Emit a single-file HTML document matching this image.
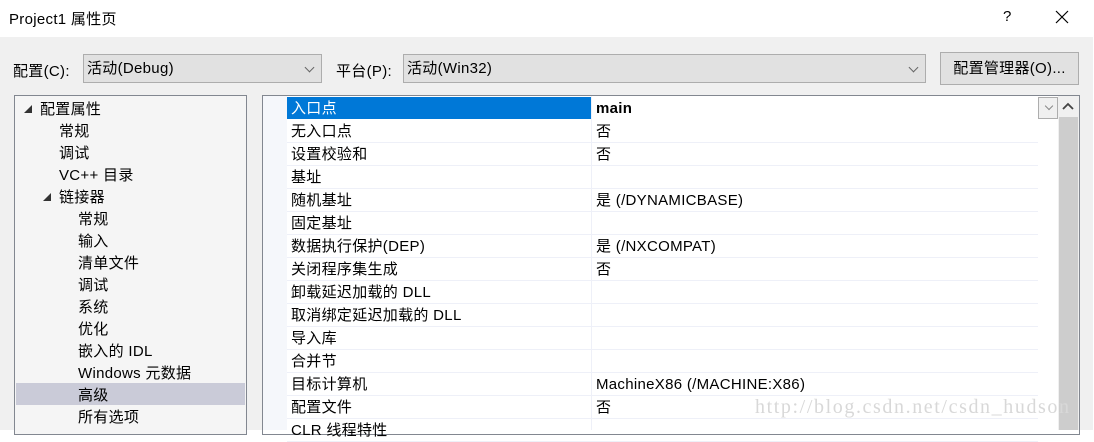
<!DOCTYPE html>
<html><head><meta charset="utf-8"><style>
*{margin:0;padding:0;box-sizing:border-box}
body{width:1094px;height:430px;overflow:hidden;background:#fff;font-family:"Liberation Sans","Noto Sans CJK SC",sans-serif;font-size:15px;letter-spacing:0.3px;color:#000;position:relative}
.a{position:absolute;white-space:nowrap}
.combo{position:absolute;background:#e1e1e1;border:1px solid #adadad;height:29px;line-height:28px;padding-left:3px}
.chev{position:absolute;right:8px;top:9px;width:7px;height:7px;border-right:1px solid #666;border-bottom:1px solid #666;transform:rotate(45deg)}
.tr{position:absolute;height:22px;line-height:23px}
.row{position:absolute;left:287px;width:751px;height:23px;border-bottom:1px solid #eef0f8;line-height:23px}
.row .n{position:absolute;left:4px}
.row .v{position:absolute;left:309px}
.tri{position:absolute;width:0;height:0;border-left:8px solid transparent;border-bottom:8px solid #333}
</style></head><body>
<div class="a" style="left:9px;top:8px;font-size:15px">Project1 属性页</div>
<div class="a" style="left:1003px;top:8px;font-size:15px">?</div>
<svg class="a" style="left:1055px;top:10px" width="14" height="14"><path d="M1 1L13 13M13 1L1 13" stroke="#000" stroke-width="1.2"/></svg>
<div class="a" style="left:0;top:37px;width:1093px;height:393px;background:#f0f0f0"></div>
<div class="a" style="left:13px;top:60px">配置(C):</div>
<div class="combo" style="left:83px;top:54px;width:239px">活动(Debug)<div class="chev"></div></div>
<div class="a" style="left:336px;top:60px">平台(P):</div>
<div class="combo" style="left:403px;top:54px;width:523px">活动(Win32)<div class="chev"></div></div>
<div class="a" style="left:940px;top:52px;width:139px;height:33px;border:1px solid #adadad;background:#e1e1e1;text-align:center;line-height:32px">配置管理器(O)...</div>
<div class="a" style="left:14px;top:95px;width:233px;height:340px;border:1px solid #828790;background:#f5f5f5"></div>
<div class="a" style="left:16px;top:383px;width:229px;height:22px;background:#cacbd8"></div>
<div class="tri" style="left:24px;top:105px"></div>
<div class="tr" style="left:40px;top:98px">配置属性</div>
<div class="tr" style="left:59px;top:120px">常规</div>
<div class="tr" style="left:59px;top:142px">调试</div>
<div class="tr" style="left:59px;top:164px">VC++ 目录</div>
<div class="tri" style="left:43px;top:193px"></div>
<div class="tr" style="left:59px;top:186px">链接器</div>
<div class="tr" style="left:78px;top:208px">常规</div>
<div class="tr" style="left:78px;top:230px">输入</div>
<div class="tr" style="left:78px;top:252px">清单文件</div>
<div class="tr" style="left:78px;top:274px">调试</div>
<div class="tr" style="left:78px;top:296px">系统</div>
<div class="tr" style="left:78px;top:318px">优化</div>
<div class="tr" style="left:78px;top:340px">嵌入的 IDL</div>
<div class="tr" style="left:78px;top:362px">Windows 元数据</div>
<div class="tr" style="left:78px;top:384px">高级</div>
<div class="tr" style="left:78px;top:406px">所有选项</div>
<div class="a" style="left:262px;top:95px;width:818px;height:340px;border:1px solid #828790;background:#fff"></div>
<div class="a" style="left:263px;top:96px;width:24px;height:334px;background:#f5f7fb"></div>
<div class="a" style="left:591px;top:96px;width:1px;height:334px;background:#eef0f8"></div>
<div class="row" style="top:97px;border:none"><div style="position:absolute;left:0;top:0;width:304px;height:22px;background:#0078d7"></div><span class="n" style="color:#fff">入口点</span><span class="v" style="font-weight:bold">main</span></div>
<div class="a" style="left:1038px;top:97px;width:20px;height:22px;border:1px solid #adadad;background:#f0f0f0"><div class="chev" style="right:5px;top:5px;width:6px;height:6px;border-color:#888"></div></div>
<div class="row" style="top:120px"><span class="n">无入口点</span><span class="v">否</span></div>
<div class="row" style="top:143px"><span class="n">设置校验和</span><span class="v">否</span></div>
<div class="row" style="top:166px"><span class="n">基址</span></div>
<div class="row" style="top:189px"><span class="n">随机基址</span><span class="v">是 (/DYNAMICBASE)</span></div>
<div class="row" style="top:212px"><span class="n">固定基址</span></div>
<div class="row" style="top:235px"><span class="n">数据执行保护(DEP)</span><span class="v">是 (/NXCOMPAT)</span></div>
<div class="row" style="top:258px"><span class="n">关闭程序集生成</span><span class="v">否</span></div>
<div class="row" style="top:281px"><span class="n">卸载延迟加载的 DLL</span></div>
<div class="row" style="top:304px"><span class="n">取消绑定延迟加载的 DLL</span></div>
<div class="row" style="top:327px"><span class="n">导入库</span></div>
<div class="row" style="top:350px"><span class="n">合并节</span></div>
<div class="row" style="top:373px"><span class="n">目标计算机</span><span class="v">MachineX86 (/MACHINE:X86)</span></div>
<div class="row" style="top:396px"><span class="n">配置文件</span><span class="v">否</span></div>
<div class="row" style="top:419px"><span class="n">CLR 线程特性</span></div>
<div class="a" style="left:1058px;top:96px;width:21px;height:334px;background:#f0f0f0"></div>
<div class="a" style="left:1059px;top:117px;width:19px;height:313px;background:#cdcdcd"></div>
<svg class="a" style="left:1062px;top:102px" width="12" height="8"><path d="M1 7L6 2L11 7" stroke="#444" stroke-width="1.8" fill="none"/></svg>
<div class="a" style="left:755px;top:396px;font-family:'Liberation Serif',serif;font-size:20px;color:#d8d8d8;letter-spacing:1.6px">http://blog.csdn.net/csdn_hudson</div>
</body></html>
